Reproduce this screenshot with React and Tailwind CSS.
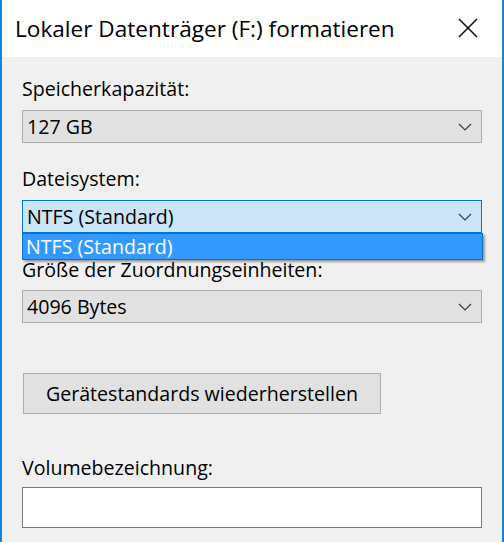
import { useState } from "react";

function Chevron() {
  return (
    <svg width="14" height="8" viewBox="0 0 14 8" className="shrink-0">
      <polyline points="1,1 7,7 13,1" fill="none" stroke="#3c3c3c" strokeWidth="1.2" />
    </svg>
  );
}

function Combo({ value, focused }) {
  return (
    <div
      className={
        "h-[33px] flex items-center justify-between pl-[4px] pr-[9px] border " +
        (focused ? "bg-[#cce4f7] border-[#0078d7]" : "bg-[#e1e1e1] border-[#adadad]")
      }
    >
      <span className="leading-[24px]">{value}</span>
      <Chevron />
    </div>
  );
}

function Label({ children, className = "" }) {
  return <div className={"h-[24px] leading-[24px] " + className}>{children}</div>;
}

export default function App() {
  const [label, setLabel] = useState("");

  return (
    <div className="w-[504px] h-[542px] overflow-hidden flex flex-col border-x-2 border-[#1883d7] bg-[#f0f0f0] text-black font-['Open_Sans','Noto_Sans',sans-serif] text-[19.6px]">
      {/* title bar */}
      <div className="h-[57px] shrink-0 bg-white flex items-center justify-between pl-[13px] pr-[24px]">
        <span className="text-[22.6px] leading-[28px] pt-[1px]">Lokaler Datenträger (F:) formatieren</span>
        <svg width="20" height="20" viewBox="0 0 20 20" className="mt-[-1px]">
          <path d="M1 1 L19 19 M19 1 L1 19" stroke="#111" strokeWidth="1.6" fill="none" />
        </svg>
      </div>

      <div className="flex flex-col px-[20px] pt-[20px]">
        <Label>Speicherkapazität:</Label>
        <div className="mt-[9px]">
          <Combo value="127 GB" />
        </div>

        <Label className="mt-[24px]">Dateisystem:</Label>
        <div className="mt-[9px] relative z-10">
          <Combo value="NTFS (Standard)" focused />
          {/* open dropdown list */}
          <div className="absolute left-0 right-[-1px] top-full h-[27px] bg-[#3399ff] border border-[#0a6fc9] text-white flex items-center pl-[3px] shadow-[2px_2px_2px_rgba(0,0,0,0.35)]">
            <span className="leading-[24px]">NTFS (Standard)</span>
          </div>
        </div>

        <Label className="mt-[25px]">Größe der Zuordnungseinheiten:</Label>
        <div className="mt-[8px]">
          <Combo value="4096 Bytes" />
        </div>

        <div className="mt-[50px]">
          <button
            type="button"
            className="w-[358px] h-[41px] ml-[1px] bg-[#e1e1e1] border border-[#adadad] leading-[24px]"
          >
            Gerätestandards wiederherstellen
          </button>
        </div>

        <Label className="mt-[42px]">Volumebezeichnung:</Label>
        <input
          value={label}
          onChange={(e) => setLabel(e.target.value)}
          className="mt-[7px] h-[41px] w-full bg-white border border-[#7a7a7a] px-[4px] outline-none"
        />
      </div>
    </div>
  );
}
